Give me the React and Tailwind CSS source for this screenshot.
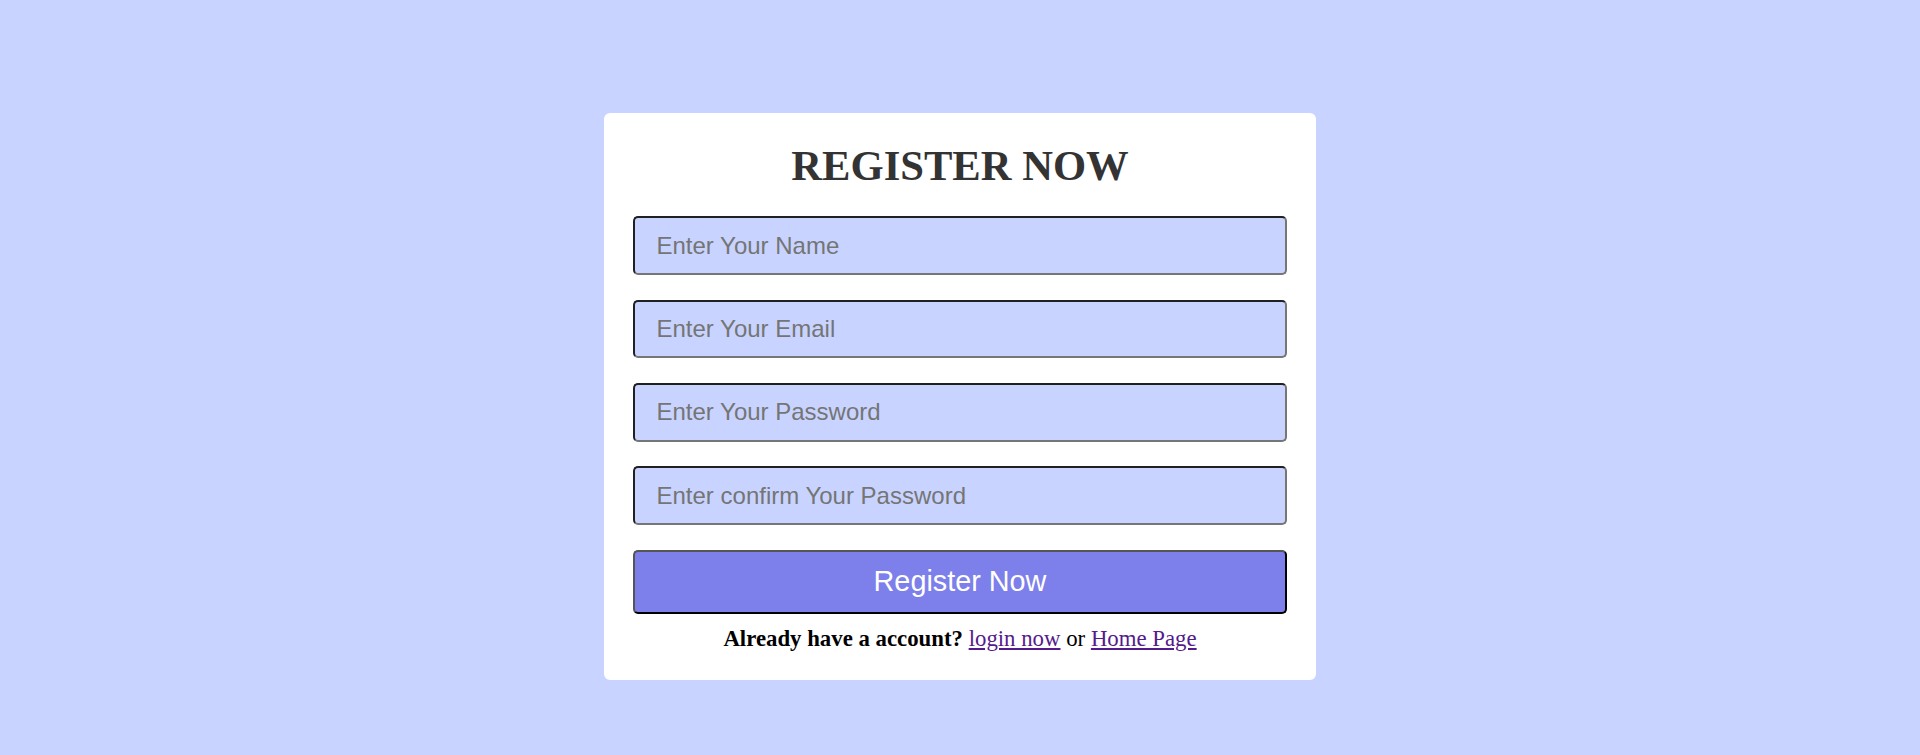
import { useState } from "react"

export default function App() {
  const [form, setForm] = useState({ name: "", email: "", password: "", cpassword: "" })

  const fields = [
    { key: "name", type: "text", placeholder: "Enter Your Name" },
    { key: "email", type: "email", placeholder: "Enter Your Email" },
    { key: "password", type: "password", placeholder: "Enter Your Password" },
    { key: "cpassword", type: "password", placeholder: "Enter confirm Your Password" },
  ]

  return (
    <div className="h-[755px] bg-[#c8d4ff] flex justify-center items-start pt-[113px]">

      {/* FORM CARD */}
      <form
        onSubmit={(e) => e.preventDefault()}
        className="w-[712px] bg-white rounded-[6px] px-[29px] pt-[27.5px] pb-[28px] flex flex-col"
      >
        <h3 className="h-[50px] leading-[50px] text-center text-[42.6px] font-bold text-[#333] font-['Liberation_Serif',serif]">
          REGISTER NOW
        </h3>

        <div className="mt-[25.8px] flex flex-col gap-[24.8px]">
          {fields.map((f) => (
            <input
              key={f.key}
              type={f.type}
              placeholder={f.placeholder}
              value={form[f.key]}
              onChange={(e) => setForm({ ...form, [f.key]: e.target.value })}
              className="w-full h-[58.6px] px-[21.5px] bg-[#c8d4ff] rounded-[5px] border-2 border-t-[#202020] border-l-[#202020] border-b-[#767676] border-r-[#767676] text-[24px] text-black placeholder:text-[#757575] font-['Liberation_Sans',Arial,sans-serif] outline-none"
            />
          ))}

          <button
            type="submit"
            className="w-full h-[64px] bg-[#7d7fea] rounded-[5px] border-2 border-t-[#555] border-l-[#555] border-b-black border-r-black text-white text-[28.8px] font-['Liberation_Sans',Arial,sans-serif] cursor-pointer"
          >
            Register Now
          </button>
        </div>

        <p className="mt-[12px] text-center text-[22.8px] leading-[26px] text-black font-['Liberation_Serif',serif]">
          <b>Already have a account?</b>{" "}
          <a href="#" className="text-[#551a8b] underline">login now</a>
          {" "}or{" "}
          <a href="#" className="text-[#551a8b] underline">Home Page</a>
        </p>
      </form>
    </div>
  )
}
